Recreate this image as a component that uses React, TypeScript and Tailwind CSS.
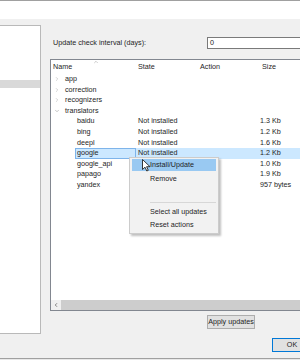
import { ChevronRight, ChevronDown, ChevronUp, ChevronLeft } from "lucide-react";

type Row = {
  name: string;
  level: number;
  open?: boolean;
  state?: string;
  size?: string;
};

// states of the last three rows sit under the context menu
const rows: Row[] = [
  { name: "app", level: 0, open: false },
  { name: "correction", level: 0, open: false },
  { name: "recognizers", level: 0, open: false },
  { name: "translators", level: 0, open: true },
  { name: "baidu", level: 1, state: "Not installed", size: "1.3 Kb" },
  { name: "bing", level: 1, state: "Not installed", size: "1.2 Kb" },
  { name: "deepl", level: 1, state: "Not installed", size: "1.6 Kb" },
  { name: "google", level: 1, state: "Not installed", size: "1.2 Kb" },
  { name: "google_api", level: 1, size: "1.0 Kb" },
  { name: "papago", level: 1, size: "1.9 Kb" },
  { name: "yandex", level: 1, size: "957 bytes" },
];

function MenuItem({ label, active }: { label: string; active?: boolean }) {
  return (
    <div
      className={
        active
          ? "h-[12px] mx-[2px] pl-[18px] flex items-center bg-[#99c9f2]"
          : "h-[12px] mx-[2px] pl-[18px] flex items-center"
      }
    >
      {label}
    </div>
  );
}

export default function App() {
  return (
    <div className="relative w-[300px] h-[360px] overflow-hidden bg-[#f0f0f0] flex flex-col font-['Liberation_Sans',Arial,sans-serif] text-[7.2px] text-[#1e1e1e] whitespace-nowrap">
      <div className="h-px bg-[#a0a0a0]" />
      <div className="h-[18px] bg-white" />

      <div className="flex h-[339px]">
        {/* left navigation panel */}
        <div className="mt-[6px] h-[309px] w-[41px] shrink-0 bg-white border-t border-b border-r border-[#b9b9b9]">
          <div className="mt-[54px] h-[8px] bg-[#d9d9d9]" />
        </div>

        <div className="pl-[9px] pt-[18px] flex flex-col w-[259px] shrink-0">
          <div className="flex items-center h-[12px]">
            <span className="w-[157px] shrink-0 pl-[3px]">Update check interval (days):</span>
            <div className="w-[100px] shrink-0 h-[12px] bg-white border border-[#7a7a7a] pl-[2px] flex items-center">0</div>
          </div>

          {/* package list */}
          <div className="mt-[10px] h-[252px] w-[260px] shrink-0 bg-white border border-[#828790] flex flex-col">
            <div className="relative flex h-[14px] items-center">
              <ChevronUp className="absolute left-[42px] top-[-1px] w-[6px] h-[6px] text-[#9a9a9a]" strokeWidth={2} />
              <span className="w-[85px] pl-[2px]">Name</span>
              <span className="w-[63px] pl-[2px]">State</span>
              <span className="w-[61px] pl-[1px]">Action</span>
              <span className="pl-[2px]">Size</span>
            </div>
            <div className="flex-1 flex flex-col">
              {rows.map((r) => {
                const sel = r.name === "google";
                return (
                  <div key={r.name} className="flex h-[10.6px] items-center leading-[10.6px]">
                    <div className="w-[85px] flex items-center h-full">
                      {r.level === 0 ? (
                        <>
                          <span className="w-[14px] pl-[3px] flex items-center">
                            {r.open ? (
                              <ChevronDown className="w-[6px] h-[6px] text-[#8a8a8a]" strokeWidth={2} />
                            ) : (
                              <ChevronRight className="w-[6px] h-[6px] text-[#a8a8a8]" strokeWidth={2} />
                            )}
                          </span>
                          <span>{r.name}</span>
                        </>
                      ) : (
                        <span
                          className={
                            sel
                              ? "ml-[24px] h-full flex-1 pl-[1px] bg-[#cce8ff] border border-[#7eb4ea] flex items-center"
                              : "ml-[24px] pl-[2px]"
                          }
                        >
                          {r.name}
                        </span>
                      )}
                    </div>
                    <div className={sel ? "flex flex-1 h-full items-center bg-[#cce8ff]" : "flex flex-1 h-full items-center"}>
                      <span className="w-[63px] pl-[2px]">{r.state}</span>
                      <span className="w-[61px]" />
                      <span>{r.size}</span>
                    </div>
                  </div>
                );
              })}
            </div>
            {/* horizontal scrollbar */}
            <div className="h-[10px] flex bg-[#f0f0f0]">
              <div className="w-[10px] flex items-center justify-center">
                <ChevronLeft className="w-[6px] h-[6px] text-[#606060]" strokeWidth={3} />
              </div>
              <div className="flex-1 bg-[#cdcdcd]" />
            </div>
          </div>

          <div className="mt-[4px] ml-[157px] w-[48px] h-[14px] bg-[#e1e1e1] border border-[#adadad] flex items-center justify-center">
            Apply updates
          </div>
          <div className="mt-[9px] ml-[222px] w-[40px] h-[14px] bg-[#e1e1e1] border border-[#0078d7] flex items-center justify-center">
            OK
          </div>
        </div>
      </div>

      <div className="h-px bg-[#a0a0a0]" />
      <div className="flex-1 bg-[#e8e8e8]" />

      {/* context menu */}
      <div className="absolute left-[129px] top-[157px] w-[90px] h-[77px] bg-[#f2f2f2] border border-[#cccccc] shadow-[2px_2px_2px_rgba(0,0,0,0.25)] pt-[1px] flex flex-col">
        <MenuItem label="Install/Update" active />
        <div className="h-[2px]" />
        <MenuItem label="Remove" />
        <div className="h-[13px]" />
        <div className="h-[8px] flex items-center mx-[2px] pl-[18px]">
          <div className="h-px flex-1 bg-[#d7d7d7]" />
        </div>
        <MenuItem label="Select all updates" />
        <div className="h-[1px]" />
        <MenuItem label="Reset actions" />
      </div>

      {/* mouse pointer */}
      <svg className="absolute left-[142px] top-[159px]" width="9" height="13" viewBox="0 0 9 13">
        <path d="M0.5 0.5 L0.5 10.5 L3 8.2 L4.8 12 L6.3 11.3 L4.6 7.7 L8 7.7 Z" fill="#fff" stroke="#222" strokeWidth="0.9" strokeLinejoin="round" />
      </svg>
    </div>
  );
}
